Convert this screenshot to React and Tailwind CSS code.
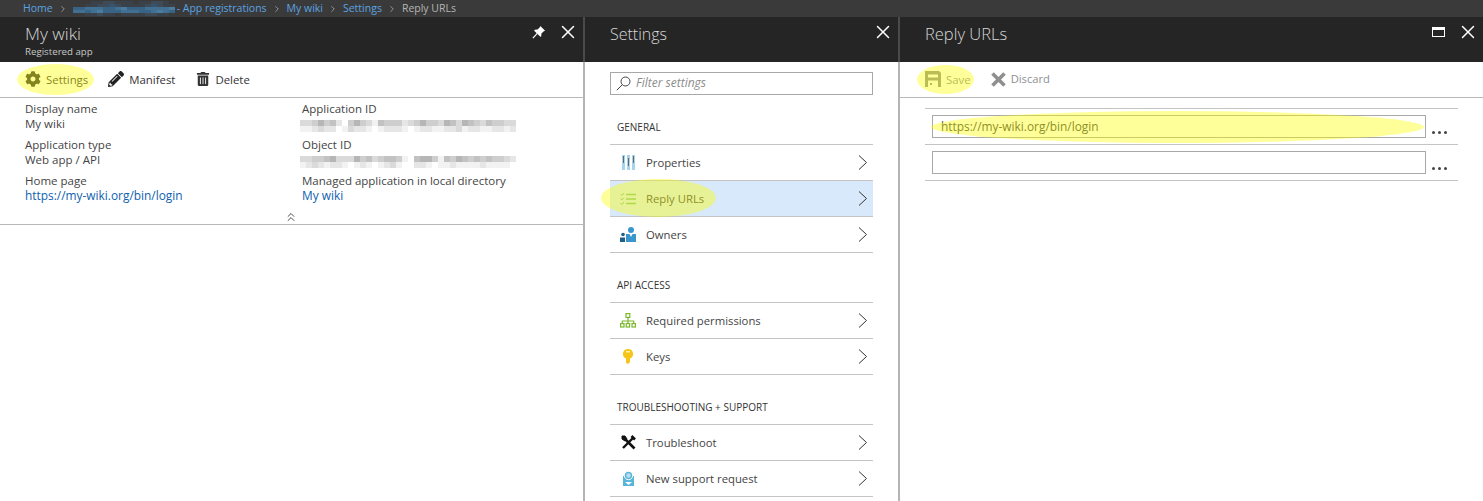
import React from 'react';
import { FaCog, FaPencilAlt, FaTrashAlt } from 'react-icons/fa';
import { X, ChevronRight, ChevronsUp } from 'lucide-react';

const font = { fontFamily: '"Open Sans", "Noto Sans", sans-serif' };

// pixelated redaction blocks, one string per row, each digit is a grey level
const levels = ['#ffffff', '#f2f2f2', '#e6e6e6', '#dadada', '#cecece', '#c2c2c2', '#b6b6b6', '#aaaaaa'];
const crumbLevels = ['#3a3a3a', '#3b4148', '#3e4a55', '#34556f', '#396384', '#417092', '#4b7b9f'];

const appIdRows = [
  '334645204643154442346443653654354433',
  '112322013221012221012211223122112212',
];
const objectIdRows = [
  '334456333645345541056641546545454432',
  '123212210121012310022101121111211110',
];
const tenantRows = [
  '00011221110112210',
  '00112232111123211',
  '44555445644455556',
  '55456444555445654',
  '00112110111122110',
];

function Mosaic({ rows, palette = levels, cell = 6, height = 6, className = '' }) {
  return (
    <svg width={rows[0].length * cell} height={rows.length * height} className={`block ${className}`} shapeRendering="crispEdges">
      {rows.map((row, y) =>
        row.split('').map((c, x) => (
          <rect key={`${x}-${y}`} x={x * cell} y={y * height} width={cell} height={height} fill={palette[+c]} />
        ))
      )}
    </svg>
  );
}

function Sep() {
  return <ChevronRight size={10} strokeWidth={1.5} className="text-[#c8c8c8]" />;
}

function Breadcrumb() {
  return (
    <div className="h-[17px] bg-[#3a3a3a] flex items-center pl-[23px] text-[10.5px] text-[#5ba3e0] gap-[5px] whitespace-nowrap">
      <span>Home</span>
      <Sep />
      <Mosaic rows={tenantRows} palette={crumbLevels} height={3} />
      <span className="-ml-[3px]">- App registrations</span>
      <Sep />
      <span>My wiki</span>
      <Sep />
      <span>Settings</span>
      <Sep />
      <span className="text-[#b4b4b4]">Reply URLs</span>
    </div>
  );
}

function Field({ label, children, link }) {
  return (
    <div className="h-[36px] text-[11.5px] leading-[15px] text-[#444]">
      <div>{label}</div>
      <div className={link ? 'text-[#0f62b0] text-[11.9px]' : ''}>{children}</div>
    </div>
  );
}

function CmdButton({ icon, label, className = '' }) {
  return (
    <div className={`flex items-center gap-[5px] text-[11.4px] ${className}`}>
      {icon}
      <span>{label}</span>
    </div>
  );
}

function CloseIcon() {
  return <X size={22} strokeWidth={1.6} className="absolute right-[4px] top-[4px] text-white" />;
}

function PinIcon() {
  return (
    <svg width="14" height="14" viewBox="0 0 16 16" className="absolute right-[37px] top-[8px]">
      <path d="M9.5 1L15 6.5L13.5 7L10.8 9.7L10.5 13L9.5 13.5L2.5 6.5L3 5.5L6.3 5.2L9 2.5Z" fill="white" />
      <path d="M6 9.5L1 15" stroke="white" strokeWidth="1.3" />
    </svg>
  );
}

function WikiBlade() {
  return (
    <div className="w-[583px] shrink-0 relative">
      <div className="h-[45px] bg-[#252525] relative pl-[25px] pt-[6px]">
        <div className="text-[17.3px] leading-[22px] font-light text-[#d8d8d8]">My wiki</div>
        <div className="text-[9.7px] leading-[13px] text-[#c8c8c8]">Registered app</div>
        <PinIcon />
        <CloseIcon />
      </div>
      <div className="h-[35px] border-b border-[#b8b8b8] flex items-center pl-[25px] text-[#333] box-content">
        <CmdButton icon={<FaCog size={16} color="#333" />} label="Settings" />
        <CmdButton className="ml-[20px]" icon={<FaPencilAlt size={16} color="#222" />} label="Manifest" />
        <CmdButton className="ml-[21px]" icon={<FaTrashAlt size={14} color="#333" />} label="Delete" />
      </div>
      <div className="grid grid-cols-[277px_1fr] pl-[25px] pt-[3px] h-[127px] relative border-b border-[#b8b8b8]">
        <div>
          <Field label="Display name">My wiki</Field>
          <Field label="Application type">Web app / API</Field>
          <Field label="Home page" link>https://my-wiki.org/bin/login</Field>
        </div>
        <div>
          <div className="h-[36px] text-[11.5px] leading-[15px] text-[#444]">
            <div>Application ID</div>
            <Mosaic rows={appIdRows} className="-ml-[2px] mt-[4px]" />
          </div>
          <div className="h-[36px] text-[11.5px] leading-[15px] text-[#444]">
            <div>Object ID</div>
            <Mosaic rows={objectIdRows} className="-ml-[2px] mt-[4px]" />
          </div>
          <Field label="Managed application in local directory" link>My wiki</Field>
        </div>
        <ChevronsUp size={14} strokeWidth={1.5} className="absolute left-[284px] top-[112px] text-[#333]" />
      </div>
      <div className="absolute left-[17px] top-[47px] w-[77px] h-[31px] rounded-[50%] bg-[#ffff00]/40" />
    </div>
  );
}

function Row({ icon, label, active }) {
  return (
    <div className={`h-[36px] border-b border-[#c4c4c4] flex items-center text-[11.3px] text-[#444] relative ${active ? 'bg-[#d7e9fa]' : ''}`}>
      <div className="w-[36px] flex justify-center">{icon}</div>
      <span className="mt-[1px]">{label}</span>
      <svg width="10" height="15" viewBox="0 0 10 15" fill="none" stroke="#333" className="absolute right-[5px] top-[10px]">
        <path d="M1 0.5L8.5 7.5L1 14.5" />
      </svg>
    </div>
  );
}

function Section({ title }) {
  return (
    <div className="h-[36px] mt-[14px] border-b border-[#c4c4c4] flex items-center pl-[7px] pt-[2px] text-[10px] font-medium text-[#333]">
      {title}
    </div>
  );
}

function SettingsBlade() {
  return (
    <div className="w-[313px] shrink-0 relative">
      <div className="h-[45px] bg-[#252525] relative pl-[25px] pt-[5px]">
        <div className="text-[16px] leading-[24px] font-light text-[#d8d8d8]">Settings</div>
        <CloseIcon />
      </div>
      <div className="pl-[25px] pr-[25px]">
        <div className="mt-[10px] h-[23px] border border-[#a8a8a8] flex items-center pl-[5px] gap-[5px] text-[12px] italic text-[#8c8c8c]">
          <svg width="15" height="15" viewBox="0 0 15 15" fill="none" stroke="#444">
            <circle cx="9.5" cy="5.5" r="4.5" />
            <path d="M6.2 8.8L0.8 14.2" />
          </svg>
          <span className="-mt-[1px]">Filter settings</span>
        </div>
        <Section title="GENERAL" />
        <Row label="Properties" icon={
          <svg width="15" height="15" viewBox="0 0 15 15">
            <rect x="1" y="0" width="3" height="15" fill="#a6d4ec" /><rect x="6" y="0" width="3" height="15" fill="#a6d4ec" /><rect x="11" y="0" width="3" height="15" fill="#a6d4ec" />
            <rect x="2" y="1" width="1" height="7" fill="#666" /><rect x="7" y="3" width="1" height="8" fill="#666" /><rect x="12" y="1" width="1" height="7" fill="#666" />
          </svg>
        } />
        <Row active label="Reply URLs" icon={
          <svg width="16" height="13" viewBox="0 0 16 13" fill="none" stroke="#7cc07c" strokeWidth="1">
            <path d="M0.5 2 L2 3.5 L4 1 M0.5 6.5 L2 8 L4 5.5 M0.5 11 L2 12.5 L4 10" />
            <path d="M6 2.5H16M6 7H16M6 11.5H16" strokeWidth="1.3" />
          </svg>
        } />
        <Row label="Owners" icon={
          <svg width="16" height="15" viewBox="0 0 16 15">
            <circle cx="11" cy="3" r="3" fill="#3a96cc" /><path d="M6 7h10v8H6z" fill="#3a96cc" />
            <circle cx="3" cy="7.5" r="1.8" fill="#1f5f8a" /><path d="M0 10.5h5v4.5H0z" fill="#1f5f8a" />
            <path d="M9.5 7h3l-1.5 3z" fill="#fff" />
          </svg>
        } />
        <Section title="API ACCESS" />
        <Row label="Required permissions" icon={
          <svg width="16" height="15" viewBox="0 0 16 15" fill="none" stroke="#7ab82c" strokeWidth="1.2">
            <rect x="6" y="0.6" width="3.8" height="3.8" /><rect x="0.6" y="10.6" width="3.4" height="3.4" /><rect x="6.2" y="10.6" width="3.4" height="3.4" /><rect x="12" y="10.6" width="3.4" height="3.4" />
            <path d="M8 4.5V10.5M2.3 10.5V8H13.7V10.5" />
          </svg>
        } />
        <Row label="Keys" icon={
          <svg width="10" height="15" viewBox="0 0 10 15">
            <path d="M5 0a5 5 0 0 1 2 9.6V13l-2 2-2-1V9.6A5 5 0 0 1 5 0z" fill="#f5c518" /><rect x="3" y="2" width="4" height="1.5" fill="#fff3b0" />
          </svg>
        } />
        <Section title="TROUBLESHOOTING + SUPPORT" />
        <Row label="Troubleshoot" icon={
          <svg width="15" height="15" viewBox="0 0 15 15" fill="none" stroke="#111">
            <path d="M3.5 3.5L13.5 13.5" strokeWidth="2.6" />
            <path d="M12 3L2 13" strokeWidth="2.4" />
            <path d="M10.5 1L14 4.5" strokeWidth="2.6" />
            <path d="M1 1L4 1L6 4L4 6L1 4z" fill="#111" strokeWidth="1" />
          </svg>
        } />
        <Row label="New support request" icon={
          <svg width="11" height="15" viewBox="0 0 11 15">
            <rect x="0" y="5" width="11" height="10" fill="#59b4d9" /><circle cx="5.5" cy="4.5" r="4.2" fill="#59b4d9" stroke="#fff" strokeWidth="1" /><circle cx="5.5" cy="4.5" r="2.2" fill="#b6e0f0" />
            <path d="M2 11 L5.5 14 L9 11z" fill="#fff" />
          </svg>
        } />
      </div>
      <div className="absolute left-[16px] top-[162px] w-[115px] h-[38px] rounded-[50%] bg-[#ffff00]/40" />
    </div>
  );
}

function UrlRow({ value }) {
  return (
    <div className="h-[36px] border-b border-[#c4c4c4] flex items-center pl-[7px] box-border">
      <div className="w-[494px] h-[23px] border border-[#a8a8a8] flex items-center pl-[8px] text-[11.9px] text-[#444]">{value}</div>
      <div className="flex gap-[3px] ml-[6px] mt-[11px]">
        <div className="w-[3px] h-[3px] rounded-full bg-[#444]" />
        <div className="w-[3px] h-[3px] rounded-full bg-[#444]" />
        <div className="w-[3px] h-[3px] rounded-full bg-[#444]" />
      </div>
    </div>
  );
}

function ReplyBlade() {
  return (
    <div className="flex-1 relative">
      <div className="h-[45px] bg-[#252525] relative pl-[25px] pt-[5px]">
        <div className="text-[16.5px] leading-[24px] font-light text-[#d8d8d8]">Reply URLs</div>
        <div className="absolute right-[38px] top-[10px] w-[13px] h-[10px] border border-white border-t-[3px]" />
        <CloseIcon />
      </div>
      <div className="h-[35px] border-b border-[#b8b8b8] flex items-center pl-[25px] text-[#8f8f8f] box-content">
        <CmdButton icon={
          <svg width="16" height="16" viewBox="0 0 16 16">
            <path fillRule="evenodd" d="M0 0h14l2 2v14H0zM3 3.5v3h10v-3zM3 9.5v6.5h10V9.5z" fill="#8f8f8f" />
            <rect x="5" y="12" width="2" height="2" fill="#8f8f8f" />
          </svg>
        } label="Save" />
        <CmdButton className="ml-[20px] !text-[11.2px]" icon={
          <svg width="15" height="15" viewBox="0 0 15 15" stroke="#8f8f8f" strokeWidth="3.6">
            <path d="M1.5 1.5L13.5 13.5M13.5 1.5L1.5 13.5" />
          </svg>
        } label="Discard" />
      </div>
      <div className="mx-[25px] mt-[10px] border-t border-[#c4c4c4]">
        <UrlRow value="https://my-wiki.org/bin/login" />
        <UrlRow value="" />
      </div>
      <div className="absolute left-[17px] top-[48px] w-[57px] h-[29px] rounded-[50%] bg-[#ffff00]/40" />
      <div className="absolute left-[31px] top-[94px] w-[493px] h-[32px] rounded-[50%] bg-[#ffff00]/40" />
    </div>
  );
}

function Divider() {
  return (
    <div className="w-[2px] shrink-0 bg-[#b4b4b4]">
      <div className="h-[45px] bg-[#4a4a4a]" />
    </div>
  );
}

export default function App() {
  return (
    <div className="w-[1483px] h-[501px] overflow-hidden bg-white" style={font}>
      <Breadcrumb />
      <div className="flex h-[484px]">
        <WikiBlade />
        <Divider />
        <SettingsBlade />
        <Divider />
        <ReplyBlade />
      </div>
    </div>
  );
}
